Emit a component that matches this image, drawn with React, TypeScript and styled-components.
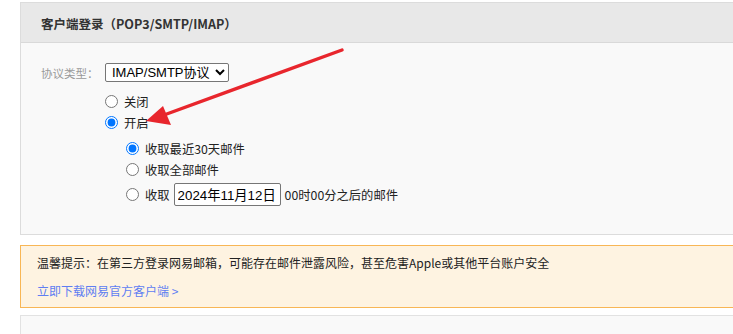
import React, { FunctionComponent, useState } from 'react';
import styled, { createGlobalStyle } from 'styled-components';

const GlobalStyle = createGlobalStyle`
    html, body {
        margin: 0;
        padding: 0;
        background: #ffffff;
        overflow: hidden;
    }
    body {
        font-family: "Noto Sans CJK SC", "Noto Sans", sans-serif;
        color: #333;
    }
`;

const StyledPage = styled.div`
    position: relative;
    width: 733px;
    height: 334px;
    padding: 2px 0 0 20px;
    box-sizing: border-box;
    display: flex;
    flex-direction: column;
`;

const StyledPanel = styled.div`
    border: 1px solid #dcdcdc;
    border-right: none;
    background: #f9f9f9;
`;

const StyledPanelHeader = styled.div`
    height: 40px;
    display: flex;
    align-items: center;
    padding: 2px 0 0 20px;
    box-sizing: border-box;
    background: #e8e8e8;
    border-bottom: 1px solid #d9d9d9;
    font-size: 12.5px;
    font-weight: 700;
    color: #333;
`;

const StyledPanelBody = styled.div`
    display: flex;
    flex-direction: column;
    padding: 20px 0 25px 20px;
`;

const StyledFieldRow = styled.div`
    display: flex;
    align-items: center;
    height: 19px;
    margin-bottom: 9px;
`;

const StyledLabel = styled.span`
    width: 64px;
    font-size: 11.5px;
    color: #999;
`;

const StyledSelect = styled.select`
    width: 124px;
    height: 19px;
    padding: 0 2px;
    font-family: "Liberation Sans", "Noto Sans CJK SC", sans-serif;
    font-size: 13px;
    color: #000;
    border: 1px solid #767676;
    border-radius: 2px;
    background: #fff;
`;

interface IStyledOption {
    readonly indent: number;
    readonly rowHeight: number;
}

const StyledOption = styled.label<IStyledOption>`
    display: flex;
    align-items: center;
    height: ${({ rowHeight }) => rowHeight}px;
    padding-left: ${({ indent }) => indent}px;
    font-size: 12.3px;
    color: #222;
`;

const StyledRadio = styled.input`
    width: 13px;
    height: 13px;
    margin: 0 6px 0 0;
`;

const StyledSubGroup = styled.div`
    display: flex;
    flex-direction: column;
    margin-top: 5px;
`;

const StyledDateInput = styled.input`
    width: 107px;
    height: 23px;
    box-sizing: border-box;
    margin: 0 4px 0 4px;
    padding: 0 3px;
    font-family: "Liberation Sans", "Noto Sans CJK SC", sans-serif;
    font-size: 13.3px;
    color: #000;
    border: 1px solid #767676;
    border-radius: 2px;
    background: #fff;
`;

const StyledNotice = styled.div`
    margin-top: 10px;
    height: 61px;
    padding-left: 16px;
    display: flex;
    flex-direction: column;
    justify-content: center;
    gap: 11px;
    background: #fef3e1;
    border: 1px solid #f8b655;
    border-right: none;
    font-size: 12px;
    color: #222;
`;

const StyledNoticeLink = styled.a`
    font-size: 12px;
    color: #5f7ef2;
    text-decoration: none;
`;

const StyledNextPanel = styled.div`
    margin-top: 7px;
    flex: 1;
    border: 1px solid #e2e2e2;
    border-right: none;
    border-bottom: none;
    background: #f9f9f9;
`;

const StyledArrow = styled.svg`
    position: absolute;
    top: 0;
    left: 0;
    pointer-events: none;
`;

const App: FunctionComponent = () => {
    const [mode, setMode] = useState('on');
    const [range, setRange] = useState('recent');

    return (
        <StyledPage>
            <GlobalStyle />
            <StyledPanel>
                <StyledPanelHeader>客户端登录（POP3/SMTP/IMAP）</StyledPanelHeader>
                <StyledPanelBody>
                    <StyledFieldRow>
                        <StyledLabel>协议类型：</StyledLabel>
                        <StyledSelect defaultValue='imap'>
                            <option value='imap'>IMAP/SMTP协议</option>
                            <option value='pop'>POP3/SMTP协议</option>
                        </StyledSelect>
                    </StyledFieldRow>
                    <StyledOption indent={64} rowHeight={21}>
                        <StyledRadio type='radio' checked={mode === 'off'} onChange={() => setMode('off')} />
                        关闭
                    </StyledOption>
                    <StyledOption indent={64} rowHeight={21}>
                        <StyledRadio type='radio' checked={mode === 'on'} onChange={() => setMode('on')} />
                        开启
                    </StyledOption>
                    <StyledSubGroup>
                        <StyledOption indent={85} rowHeight={21}>
                            <StyledRadio
                                type='radio'
                                checked={range === 'recent'}
                                onChange={() => setRange('recent')}
                            />
                            收取最近30天邮件
                        </StyledOption>
                        <StyledOption indent={85} rowHeight={21}>
                            <StyledRadio type='radio' checked={range === 'all'} onChange={() => setRange('all')} />
                            收取全部邮件
                        </StyledOption>
                        <StyledOption indent={85} rowHeight={29}>
                            <StyledRadio type='radio' checked={range === 'from'} onChange={() => setRange('from')} />
                            收取
                            <StyledDateInput type='text' defaultValue='2024年11月12日' />
                            00时00分之后的邮件
                        </StyledOption>
                    </StyledSubGroup>
                </StyledPanelBody>
            </StyledPanel>
            <StyledNotice>
                <span>温馨提示：在第三方登录网易邮箱，可能存在邮件泄露风险，甚至危害Apple或其他平台账户安全</span>
                <StyledNoticeLink href='#'>立即下载网易官方客户端 &gt;</StyledNoticeLink>
            </StyledNotice>
            <StyledNextPanel />
            <StyledArrow width='733' height='334' viewBox='0 0 733 334'>
                <line x1='342' y1='50' x2='164' y2='115' stroke='#e8262d' strokeWidth='3.4' strokeLinecap='round' />
                <polygon points='146,121 163,106 171,125' fill='#e8262d' />
            </StyledArrow>
        </StyledPage>
    );
};

export default App;
